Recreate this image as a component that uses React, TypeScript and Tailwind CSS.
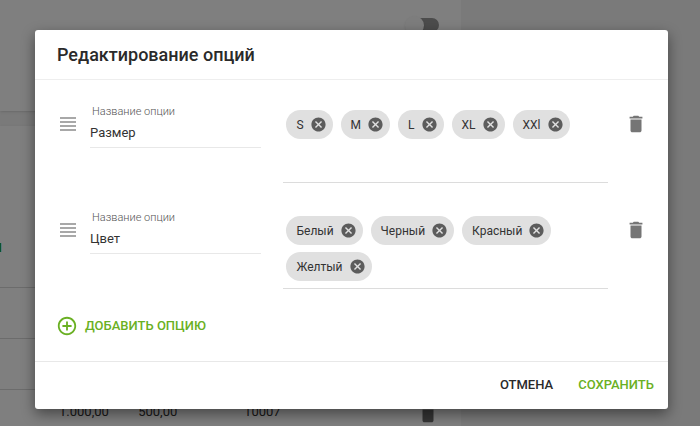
import React, { useState } from 'react';
import { MdAddCircleOutline, MdCancel, MdDelete, MdViewHeadline } from 'react-icons/md';

interface Option {
  id: number;
  name: string;
  values: string[];
}

interface OptionRowProps {
  option: Option;
  onRename: (name: string) => void;
  onRemoveValue: (value: string) => void;
  onRemove: () => void;
}

const initialOptions: Option[] = [
  { id: 1, name: 'Размер', values: ['S', 'M', 'L', 'XL', 'XXl'] },
  { id: 2, name: 'Цвет', values: ['Белый', 'Черный', 'Красный', 'Желтый'] },
];

function OptionRow({ option, onRename, onRemoveValue, onRemove }: OptionRowProps) {
  const inputId = `option-name-${option.id}`;

  return (
    <div className="flex items-start">
      <button aria-label="Переместить" className="mt-2 mr-2.5 shrink-0 cursor-move text-[#a8a8a8]">
        <MdViewHeadline size={24} />
      </button>

      <div className="mr-[22px] min-w-0 flex-[8] border-b border-[#e8e8e8]">
        <label htmlFor={inputId} className="block pl-0.5 text-[11px] leading-4 font-light text-[#555]">
          Название опции
        </label>
        <input
          id={inputId}
          value={option.name}
          onChange={(e) => onRename(e.target.value)}
          className="block h-[27px] w-full pb-[3px] text-[13px] text-[#333] outline-none"
        />
      </div>

      <div className="mr-[17px] flex min-h-[79px] min-w-0 flex-[15] flex-wrap content-start gap-x-2 gap-y-[7px] border-b border-[#dcdcdc] pt-1.5 pb-[7px] pl-[3px]">
        {option.values.map((value) => (
          <span
            key={value}
            className="flex h-[29px] items-center gap-1.5 rounded-full bg-[#e0e0e0] pr-1.5 pl-2.5 text-xs text-[#333]"
          >
            {value}
            <button aria-label={`Удалить ${value}`} onClick={() => onRemoveValue(value)} className="text-[#5c5c5c]">
              <MdCancel size={17} />
            </button>
          </span>
        ))}
      </div>

      <button aria-label="Удалить опцию" onClick={onRemove} className="mt-[9px] shrink-0 text-[#757575]">
        <MdDelete size={22} />
      </button>
    </div>
  );
}

// Product page that stays visible behind the dialog
function ProductPage() {
  return (
    <div className="flex h-screen w-[65.8%] flex-col gap-[15px] overflow-hidden">
      <div className="flex h-[111px] shrink-0 items-start justify-end bg-white pt-[15px] pr-[22px] shadow">
        <label className="relative flex h-5 w-[34px] items-center justify-end">
          <input type="checkbox" aria-label="Опции" className="peer sr-only" />
          <span className="h-3.5 w-7 rounded-full bg-[#999]" />
          <span className="absolute left-0 size-[19px] rounded-full bg-[#fafafa] shadow" />
        </label>
      </div>

      <div className="shrink-0 bg-white shadow">
        <div className="flex h-[161px] w-0.5 items-end justify-end overflow-hidden pb-[29px]">
          <a href="#options" className="text-[13px] leading-5 font-medium text-[#16a010]">
            И
          </a>
        </div>
        <table className="w-full table-fixed text-left text-[13px] text-[#333]">
          <colgroup>
            <col className="w-[30%]" />
            <col className="w-[23%]" />
            <col />
            <col className="w-[20%]" />
          </colgroup>
          <tbody>
            <tr className="h-[51px] border-t border-[#d8d8d8]">
              <td colSpan={4} />
            </tr>
            <tr className="h-[51px] border-t border-[#d8d8d8]">
              <td colSpan={4} />
            </tr>
            <tr className="h-11 border-t border-[#d8d8d8]">
              <td className="pl-[59px]">1.000,00</td>
              <td>500,00</td>
              <td>10007</td>
              <td className="pt-1 pr-[22px]">
                <button aria-label="Удалить" className="ml-auto block text-[#6b6b6b]">
                  <MdDelete size={22} />
                </button>
              </td>
            </tr>
          </tbody>
        </table>
      </div>
    </div>
  );
}

export default function App() {
  const [options, setOptions] = useState<Option[]>(initialOptions);

  const updateOption = (id: number, changes: Partial<Option>) => {
    setOptions(options.map((option) => (option.id === id ? { ...option, ...changes } : option)));
  };

  const addOption = () => {
    setOptions([...options, { id: Date.now(), name: '', values: [] }]);
  };

  return (
    <div className="relative min-h-screen overflow-hidden bg-[#f4f4f4] font-[Roboto,sans-serif]">
      <ProductPage />

      <div className="absolute inset-0 overflow-auto bg-black/50 pt-[30px] pr-8 pb-4 pl-[35px]">
        <div
          role="dialog"
          aria-labelledby="dialog-title"
          className="rounded-[3px] bg-white shadow-[0_5px_14px_rgba(0,0,0,0.45)]"
        >
          <header className="border-b border-[#eee] px-[22px] py-3">
            <h2 id="dialog-title" className="text-lg leading-[25px] font-medium text-[#2a2a2a]">
              Редактирование опций
            </h2>
          </header>

          <div className="px-[21px] pt-6 pb-[23px]">
            <div className="flex flex-col gap-[27px]">
              {options.map((option) => (
                <OptionRow
                  key={option.id}
                  option={option}
                  onRename={(name) => updateOption(option.id, { name })}
                  onRemoveValue={(value) =>
                    updateOption(option.id, { values: option.values.filter((v) => v !== value) })
                  }
                  onRemove={() => setOptions(options.filter((o) => o.id !== option.id))}
                />
              ))}
            </div>

            <button
              onClick={addOption}
              className="mt-[25px] flex h-6 items-center gap-[7px] text-[13px] font-medium text-[#6ab023]"
            >
              <MdAddCircleOutline size={22} />
              ДОБАВИТЬ ОПЦИЮ
            </button>
          </div>

          <footer className="flex h-12 items-center justify-end gap-[25px] border-t border-[#e8e8e8] pr-3.5 pb-0.5 text-[13px] font-medium">
            <button className="text-[#2a2a2a]">ОТМЕНА</button>
            <button className="text-[#6ab023]">СОХРАНИТЬ</button>
          </footer>
        </div>
      </div>
    </div>
  );
}
